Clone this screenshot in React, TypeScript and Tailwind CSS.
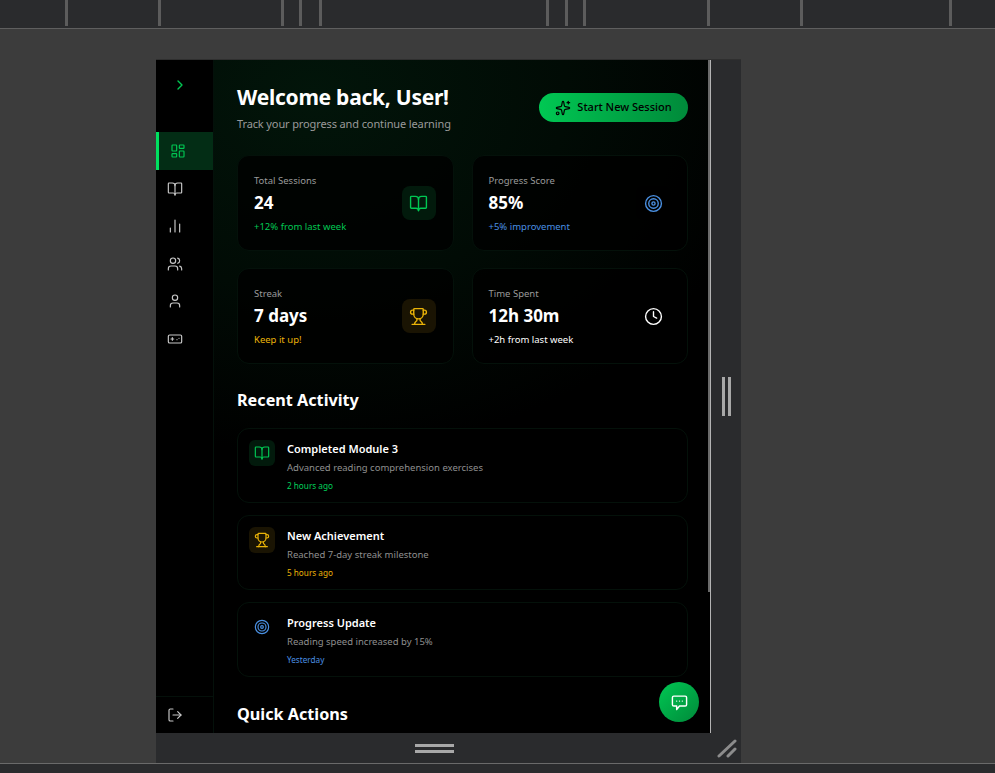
import {
  BookOpen,
  ChartNoAxesColumn,
  ChevronRight,
  Clock,
  Gamepad,
  LayoutDashboard,
  LogOut,
  Sparkles,
  Target,
  Trophy,
  User,
  Users,
} from 'lucide-react';
import type { ReactNode } from 'react';

const TICKS = [
  'ml-[65px]',
  'ml-[90px]',
  'ml-[120px]',
  'ml-[15px]',
  'ml-[17px]',
  'ml-[224px]',
  'ml-[16px]',
  'ml-[15px]',
  'ml-[121px]',
  'ml-[90px]',
  'ml-[146px]',
];

const NAV_ICONS = [BookOpen, ChartNoAxesColumn, Users, User, Gamepad];

interface StatCardProps {
  label: string;
  value: string;
  note: string;
  noteClass: string;
  icon: ReactNode;
  iconClass: string;
}

function StatCard({ label, value, note, noteClass, icon, iconClass }: StatCardProps) {
  return (
    <div className="flex h-[96px] items-center justify-between rounded-xl border border-[#04110a] bg-black/80 pl-[16px] pr-[17px]">
      <div className="pt-[1px]">
        <p className="text-[9.5px] leading-[13px] text-[#9a9a9a]">{label}</p>
        <p className="mt-[4px] text-[17px] font-bold leading-[24px] text-white">{value}</p>
        <p className={`mt-[5px] text-[9.5px] leading-[13px] ${noteClass}`}>{note}</p>
      </div>
      <div className={`flex h-[34px] w-[34px] items-center justify-center rounded-lg ${iconClass}`}>{icon}</div>
    </div>
  );
}

interface ActivityCardProps {
  title: string;
  detail: string;
  time: string;
  timeClass: string;
  icon: ReactNode;
  iconClass: string;
}

function ActivityCard({ title, detail, time, timeClass, icon, iconClass }: ActivityCardProps) {
  return (
    <div className="flex h-[75px] gap-[12px] rounded-xl border border-[#04110a] bg-black pl-[11px] pt-[11px]">
      <div className={`flex h-[26px] w-[26px] shrink-0 items-center justify-center rounded-md ${iconClass}`}>{icon}</div>
      <div>
        <p className="text-[11px] font-semibold leading-[18px] text-white">{title}</p>
        <p className="mt-[3px] text-[9.5px] leading-[14px] text-[#8f8f8f]">{detail}</p>
        <p className={`mt-[4px] text-[8.2px] leading-[13px] ${timeClass}`}>{time}</p>
      </div>
    </div>
  );
}

export default function App() {
  return (
    <div className="flex h-[773px] w-[995px] flex-col overflow-hidden bg-[#3c3c3c] font-['Noto_Sans',sans-serif]">
      <div className="flex h-[29px] shrink-0 border-b border-[#5f5f5f] bg-[#2a2b2d] pb-[2px]">
        {TICKS.map((tick) => (
          <span key={tick} className={`h-full w-[3px] bg-[#5c5c5c] ${tick}`} />
        ))}
      </div>

      <div className="flex min-h-0 flex-1 pl-[156px] pt-[30px]">
        <div className="flex h-[704px] w-[585px] flex-col border-t border-[#2f2f2f]">
          <div className="flex min-h-0 flex-1">
            <div className="flex h-[673px] w-[555px] overflow-hidden bg-black">
              <aside className="flex w-[58px] shrink-0 flex-col border-r border-[#04100a] bg-black">
                <div className="flex h-[72px] shrink-0 items-start pl-[16px] pt-[17px] text-[#00c853]">
                  <ChevronRight size={16} />
                </div>
                <div className="flex h-[38px] items-center border-l-[3px] border-[#00e060] bg-[#032d15] pl-[11px] text-[#00c853]">
                  <LayoutDashboard size={16} strokeWidth={1.75} />
                </div>
                {NAV_ICONS.map((Icon, index) => (
                  <div key={index} className="flex h-[37.5px] items-center pl-[11px] text-[#c8c8c8]">
                    <Icon size={16} strokeWidth={1.75} />
                  </div>
                ))}
                <div className="mt-auto flex h-[37px] items-center border-t border-[#04100a] pl-[11px] text-[#c8c8c8]">
                  <LogOut size={16} strokeWidth={1.75} />
                </div>
              </aside>

              <main className="relative min-w-0 flex-1 overflow-hidden bg-[radial-gradient(ellipse_460px_360px_at_20%_5%,#02150a_0%,#010b05_55%,#000_100%)] pl-[23px] pr-[23px] pt-[22px]">
                <div className="absolute right-0 top-0 h-[532px] w-[3px] bg-[#6a6a6a]" />
                <div className="absolute bottom-0 right-0 h-full w-px bg-[#b4b4b4]" />

                <div className="flex items-start justify-between">
                  <div>
                    <h1 className="text-[21px] font-bold leading-[30px] tracking-[-0.25px] text-white">Welcome back, User!</h1>
                    <p className="mt-[3px] text-[11px] leading-[18px] tracking-[-0.12px] text-[#9a9a9a]">Track your progress and continue learning</p>
                  </div>
                  <button
                    type="button"
                    className="mt-[11px] flex h-[29px] w-[149px] items-center justify-center gap-[6px] rounded-full bg-gradient-to-r from-[#00c853] to-[#008a3a] text-[11px] font-medium text-black"
                  >
                    <Sparkles size={16} strokeWidth={1.75} />
                    Start New Session
                  </button>
                </div>

                <div className="mt-[22px] grid grid-cols-2 gap-x-[18px] gap-y-[17px]">
                  <StatCard
                    label="Total Sessions"
                    value="24"
                    note="+12% from last week"
                    noteClass="text-[#00c853]"
                    icon={<BookOpen size={19} strokeWidth={1.75} className="text-[#00c853]" />}
                    iconClass="bg-[#021a0c]"
                  />
                  <StatCard
                    label="Progress Score"
                    value="85%"
                    note="+5% improvement"
                    noteClass="text-[#4a90e2]"
                    icon={<Target size={19} strokeWidth={1.75} className="text-[#4a90e2]" />}
                    iconClass="bg-black"
                  />
                  <StatCard
                    label="Streak"
                    value="7 days"
                    note="Keep it up!"
                    noteClass="text-[#eab308]"
                    icon={<Trophy size={19} strokeWidth={1.75} className="text-[#eab308]" />}
                    iconClass="bg-[#1a1403]"
                  />
                  <StatCard
                    label="Time Spent"
                    value="12h 30m"
                    note="+2h from last week"
                    noteClass="text-white"
                    icon={<Clock size={19} strokeWidth={1.75} className="text-white" />}
                    iconClass="bg-black"
                  />
                </div>

                <h2 className="mt-[24px] text-[16.2px] font-bold leading-[24px] text-white">Recent Activity</h2>

                <div className="mt-[16px] flex flex-col gap-[12px]">
                  <ActivityCard
                    title="Completed Module 3"
                    detail="Advanced reading comprehension exercises"
                    time="2 hours ago"
                    timeClass="text-[#00d25a]"
                    icon={<BookOpen size={16} strokeWidth={1.75} className="text-[#00c853]" />}
                    iconClass="bg-[#021a0c]"
                  />
                  <ActivityCard
                    title="New Achievement"
                    detail="Reached 7-day streak milestone"
                    time="5 hours ago"
                    timeClass="text-[#eab308]"
                    icon={<Trophy size={16} strokeWidth={1.75} className="text-[#eab308]" />}
                    iconClass="bg-[#1a1403]"
                  />
                  <ActivityCard
                    title="Progress Update"
                    detail="Reading speed increased by 15%"
                    time="Yesterday"
                    timeClass="text-[#4a90e2]"
                    icon={<Target size={16} strokeWidth={1.75} className="text-[#4a90e2]" />}
                    iconClass="bg-black"
                  />
                </div>

                <h2 className="mt-[25px] text-[16.2px] font-bold leading-[24px] text-white">Quick Actions</h2>

                <button
                  type="button"
                  className="absolute bottom-[11px] right-[12px] flex h-[40px] w-[40px] items-center justify-center rounded-full bg-gradient-to-br from-[#00c853] to-[#008a3a] text-white"
                >
                  <svg width="17" height="17" viewBox="0 0 24 24" fill="none" stroke="currentColor" strokeWidth="2" strokeLinejoin="round" strokeLinecap="round">
                    <path d="M4 3h16a2 2 0 0 1 2 2v10a2 2 0 0 1-2 2h-8l-4 5v-5H4a2 2 0 0 1-2-2V5a2 2 0 0 1 2-2z" />
                    <path d="M8 10h.01M12 10h.01M16 10h.01" />
                  </svg>
                </button>
              </main>
            </div>

            <div className="flex w-[30px] items-center justify-center bg-[#2a2b2d]">
              <div className="flex h-[39px] gap-[3px]">
                <span className="h-full w-[3px] bg-[#a8a8a8]" />
                <span className="h-full w-[3px] bg-[#a8a8a8]" />
              </div>
            </div>
          </div>

          <div className="relative flex h-[30px] shrink-0 flex-col items-center justify-center gap-[3px] bg-[#2a2b2d] pr-[28px]">
            <span className="h-[3px] w-[39px] bg-[#a8a8a8]" />
            <span className="h-[3px] w-[39px] bg-[#a8a8a8]" />
            <svg className="absolute bottom-[5px] right-[4px]" width="20" height="20" viewBox="0 0 20 20" fill="none" stroke="#8c8c8c" strokeWidth="3" strokeLinecap="round">
              <path d="M2 18 L18 3" />
              <path d="M11 18 L18 11" />
            </svg>
          </div>
        </div>
      </div>

      <div className="h-[10px] shrink-0 border-t border-[#6a6a6a] bg-[#2a2b2d]" />
    </div>
  );
}
